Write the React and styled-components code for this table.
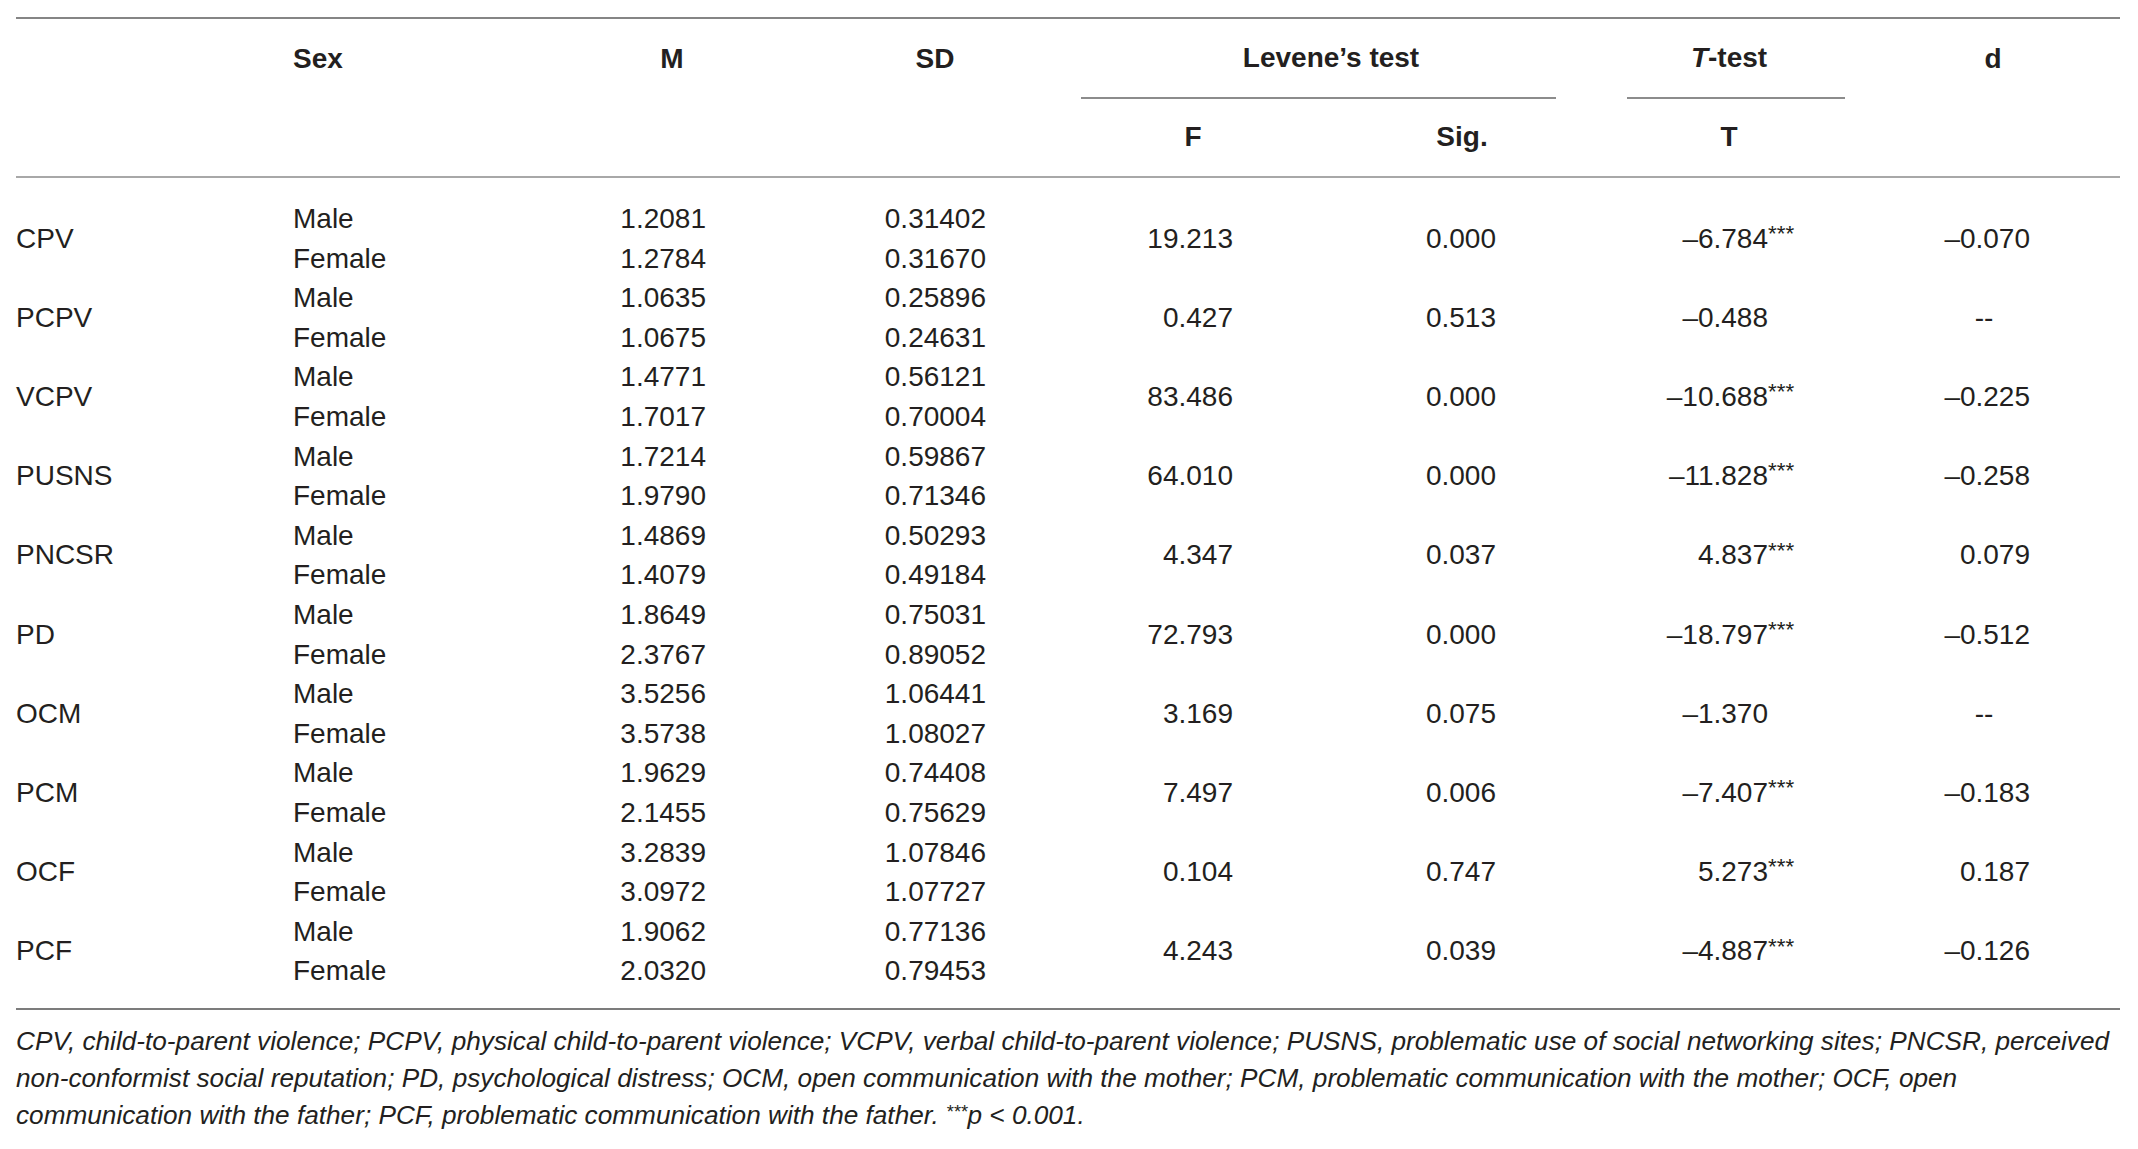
import React from 'react'
import styled, { createGlobalStyle } from 'styled-components'

const GlobalStyle = createGlobalStyle`
  body {
    margin: 0;
    background: #ffffff;
    font-family: 'Liberation Sans', Arial, sans-serif;
    color: #231f20;
  }
`

const Page = styled.div`
  padding: 17px 18px 0 16px;
  width: 2104px;
`

const Table = styled.table`
  width: 2104px;
  border-collapse: collapse;
  table-layout: fixed;
  border-top: 2px solid #858585;
  border-bottom: 2px solid #7c7c7c;
  font-size: 28px;
`

const Head = styled.thead`
  border-bottom: 2px solid #a8a8a8;
`

const HeadCell = styled.th`
  height: ${props => props.$h || 78}px;
  padding: 0 ${props => props.$pr || 0}px 0 ${props => props.$pl || 0}px;
  text-align: ${props => props.$align || 'center'};
  vertical-align: middle;
  font-weight: 700;
`

const GroupHead = styled.div`
  display: flex;
  flex-direction: column;
  height: 79px;
`

const GroupLabel = styled.div`
  flex: 1;
  display: flex;
  align-items: center;
  justify-content: center;
  padding: 0 ${props => props.$pr || 0}px 0 ${props => props.$pl || 0}px;
`

const GroupRule = styled.div`
  height: 0;
  border-bottom: 2px solid #8c8c8c;
  margin: 0 ${props => props.$mr}px -1px ${props => props.$ml}px;
`

const Body = styled.tbody`
  tr:first-child td {
    padding-top: 21px;
  }

  tr:last-child td {
    padding-bottom: 17px;
  }
`

const Cell = styled.td`
  padding: 0 ${props => props.$pr || 0}px 0 ${props => props.$pl || 0}px;
  text-align: ${props => props.$align || 'right'};
  vertical-align: middle;
  font-weight: 400;
  white-space: nowrap;
`

const Line = styled.div`
  height: 39.6px;
  line-height: 39.6px;
`

const Stars = styled.span`
  display: inline-block;
  width: 0;
  overflow: visible;
  white-space: nowrap;
  font-size: 0.8em;
  vertical-align: 0.3em;
  line-height: 1;
`

const Note = styled.p`
  margin: 0;
  padding-top: 13px;
  font-size: 26.2px;
  line-height: 37px;
  font-style: italic;
`

const NoBreak = styled.span`
  white-space: nowrap;
`

const Sup = styled.sup`
  font-size: 0.7em;
  vertical-align: 0.35em;
  line-height: 0;
`

const rows = [
  { name: 'CPV', m: ['1.2081', '1.2784'], sd: ['0.31402', '0.31670'], f: '19.213', sig: '0.000', t: '–6.784', star: true, d: '–0.070' },
  { name: 'PCPV', m: ['1.0635', '1.0675'], sd: ['0.25896', '0.24631'], f: '0.427', sig: '0.513', t: '–0.488', star: false, d: '--' },
  { name: 'VCPV', m: ['1.4771', '1.7017'], sd: ['0.56121', '0.70004'], f: '83.486', sig: '0.000', t: '–10.688', star: true, d: '–0.225' },
  { name: 'PUSNS', m: ['1.7214', '1.9790'], sd: ['0.59867', '0.71346'], f: '64.010', sig: '0.000', t: '–11.828', star: true, d: '–0.258' },
  { name: 'PNCSR', m: ['1.4869', '1.4079'], sd: ['0.50293', '0.49184'], f: '4.347', sig: '0.037', t: '4.837', star: true, d: '0.079' },
  { name: 'PD', m: ['1.8649', '2.3767'], sd: ['0.75031', '0.89052'], f: '72.793', sig: '0.000', t: '–18.797', star: true, d: '–0.512' },
  { name: 'OCM', m: ['3.5256', '3.5738'], sd: ['1.06441', '1.08027'], f: '3.169', sig: '0.075', t: '–1.370', star: false, d: '--' },
  { name: 'PCM', m: ['1.9629', '2.1455'], sd: ['0.74408', '0.75629'], f: '7.497', sig: '0.006', t: '–7.407', star: true, d: '–0.183' },
  { name: 'OCF', m: ['3.2839', '3.0972'], sd: ['1.07846', '1.07727'], f: '0.104', sig: '0.747', t: '5.273', star: true, d: '0.187' },
  { name: 'PCF', m: ['1.9062', '2.0320'], sd: ['0.77136', '0.79453'], f: '4.243', sig: '0.039', t: '–4.887', star: true, d: '–0.126' }
]

const widths = [277, 279, 200, 314, 214, 324, 210, 286]

const Pair = ({ values }) => (
  <>
    {values.map(v => <Line key={v}>{v}</Line>)}
  </>
)

const App = () => (
  <Page>
    <GlobalStyle />
    <Table>
      <colgroup>
        {widths.map((w, i) => <col key={i} style={{ width: w }} />)}
      </colgroup>
      <Head>
        <tr>
          <HeadCell $h={79} />
          <HeadCell $align='left'>Sex</HeadCell>
          <HeadCell>M</HeadCell>
          <HeadCell $pl={12}>SD</HeadCell>
          <HeadCell colSpan={2}>
            <GroupHead>
              <GroupLabel $pr={48}>Levene’s test</GroupLabel>
              <GroupRule $ml={-5} $mr={68} />
            </GroupHead>
          </HeadCell>
          <HeadCell>
            <GroupHead>
              <GroupLabel><i>T</i>-test</GroupLabel>
              <GroupRule $ml={3} $mr={-11} />
            </GroupHead>
          </HeadCell>
          <HeadCell $pl={32}>d</HeadCell>
        </tr>
        <tr>
          <HeadCell />
          <HeadCell />
          <HeadCell />
          <HeadCell />
          <HeadCell>F</HeadCell>
          <HeadCell>Sig.</HeadCell>
          <HeadCell>T</HeadCell>
          <HeadCell />
        </tr>
      </Head>
      <Body>
        {rows.map(r => (
          <tr key={r.name}>
            <Cell $align='left'>{r.name}</Cell>
            <Cell $align='left'><Pair values={['Male', 'Female']} /></Cell>
            <Cell $pr={66}><Pair values={r.m} /></Cell>
            <Cell $pr={100}><Pair values={r.sd} /></Cell>
            <Cell $pr={67}>{r.f}</Cell>
            <Cell $pr={128}>{r.sig}</Cell>
            <Cell $pr={66}>
              {r.t}
              {r.star && <Stars>***</Stars>}
            </Cell>
            {r.d === '--'
              ? <Cell $align='center' $pl={14}>{r.d}</Cell>
              : <Cell $pr={90}>{r.d}</Cell>}
          </tr>
        ))}
      </Body>
    </Table>
    <Note>
      CPV, child-to-parent violence; PCPV, physical child-to-parent violence; VCPV, verbal child-to-parent violence; PUSNS, problematic use of social networking sites; PNCSR, perceived <NoBreak>non-conformist</NoBreak> social reputation; PD, psychological distress; OCM, open communication with the mother; PCM, problematic communication with the mother; OCF, open communication with the father; PCF, problematic communication with the father. <Sup>***</Sup>p &lt; 0.001.
    </Note>
  </Page>
)

export default App
